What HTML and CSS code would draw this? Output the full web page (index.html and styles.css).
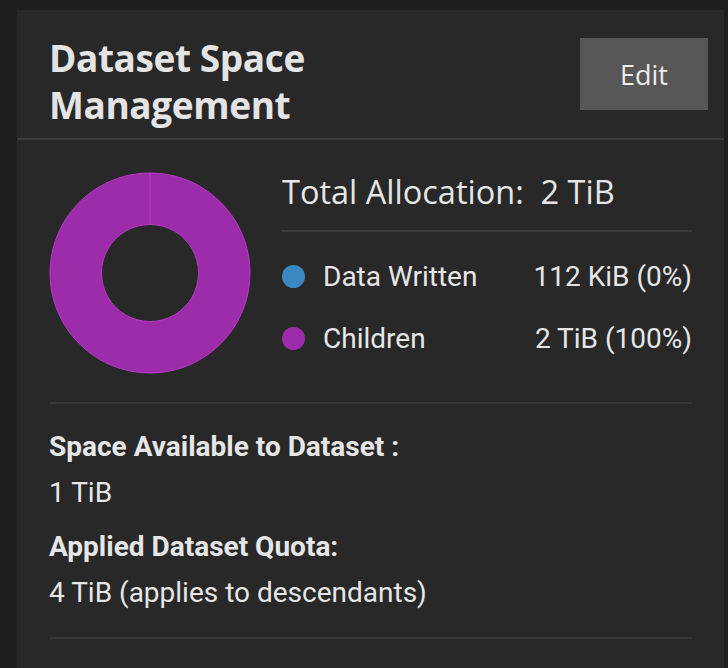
FILE: index.html
```html
<!DOCTYPE html>
<html>
<head>
<meta charset="utf-8">
<link rel="stylesheet" href="styles.css">
</head>
<body>
<div class="card">
  <div class="card-header">
    <h2 class="title">Dataset Space<br>Management</h2>
    <button class="edit-btn">Edit</button>
  </div>
  <div class="card-body">
    <div class="chart-row">
      <svg class="donut" width="202" height="202" viewBox="-1 -1 202 202">
        <path d="M100 0 A100 100 0 1 1 99.99 0 Z M100 51.5 A48.5 48.5 0 1 0 100.01 51.5 Z" fill="#9c2ca9" fill-rule="evenodd" stroke="#b43ac4" stroke-width="1"/>
        <line x1="100" y1="0" x2="100" y2="51.5" stroke="#b43ac4" stroke-width="1"/>
      </svg>
      <div class="legend">
        <div class="total">Total Allocation:&nbsp; 2 TiB</div>
        <div class="legend-row first">
          <span class="dot blue"></span>
          <span class="label">Data Written</span>
          <span class="value">112 KiB (0%)</span>
        </div>
        <div class="legend-row">
          <span class="dot purple"></span>
          <span class="label">Children</span>
          <span class="value">2 TiB (100%)</span>
        </div>
      </div>
    </div>
    <div class="details">
      <div class="detail-label">Space Available to Dataset :</div>
      <div class="detail-value">1 TiB</div>
      <div class="detail-label second">Applied Dataset Quota:</div>
      <div class="detail-value">4 TiB (applies to descendants)</div>
    </div>
  </div>
</div>
</body>
</html>
```

FILE: styles.css
```css
html, body {
  margin: 0;
  padding: 0;
  background: #1e1e1e;
  height: 668px;
  overflow: hidden;
}

.card {
  margin: 10px 4px 0 17px;
  background: #282828;
  height: 658px;
  color: #e6e6e6;
  font-family: Roboto, "Liberation Sans", sans-serif;
}

.card-header {
  display: flex;
  justify-content: space-between;
  align-items: flex-start;
  padding: 24px 16px 0 32px;
  height: 104px;
  border-bottom: 2px solid #3b3b3b;
}

.title {
  margin: 0;
  font-family: "Open Sans", sans-serif;
  font-weight: 700;
  font-size: 37px;
  line-height: 47px;
  letter-spacing: -0.4px;
  color: #e4e4e4;
}

.edit-btn {
  margin-top: 4px;
  width: 128px;
  height: 72px;
  background: #575757;
  border: none;
  color: #ececec;
  font-family: "Open Sans", sans-serif;
  font-size: 27px;
  padding: 0;
}

.card-body {
  padding: 32px 32px 0 32px;
}

.chart-row {
  display: flex;
  gap: 31px;
  padding-bottom: 28px;
  border-bottom: 2px solid #363636;
}

.donut {
  display: block;
  flex: none;
}

.legend {
  flex: 1;
  display: flex;
  flex-direction: column;
}

.total {
  font-family: "Open Sans", sans-serif;
  font-size: 32.5px;
  font-weight: 400;
  line-height: 40px;
  height: 58px;
  border-bottom: 2px solid #3b3b3b;
  color: #e6e6e6;
}

.legend-row {
  display: flex;
  align-items: center;
  height: 62px;
  font-size: 28px;
}

.legend-row.first {
  margin-top: 13px;
}

.dot {
  width: 23px;
  height: 23px;
  border-radius: 50%;
  flex: none;
  margin-right: 18px;
}

.blue { background: #3b87bf; }
.purple { background: #9c2ca9; }

.label {
  flex: 1;
}

.value {
  text-align: right;
}

.details {
  padding: 20px 0 21px 0;
  border-bottom: 2px solid #363636;
}

.detail-label {
  font-weight: 700;
  font-size: 28px;
  line-height: 46px;
}

.detail-label.second {
  margin-top: 8px;
}

.detail-value {
  font-size: 28px;
  line-height: 46px;
}
```
